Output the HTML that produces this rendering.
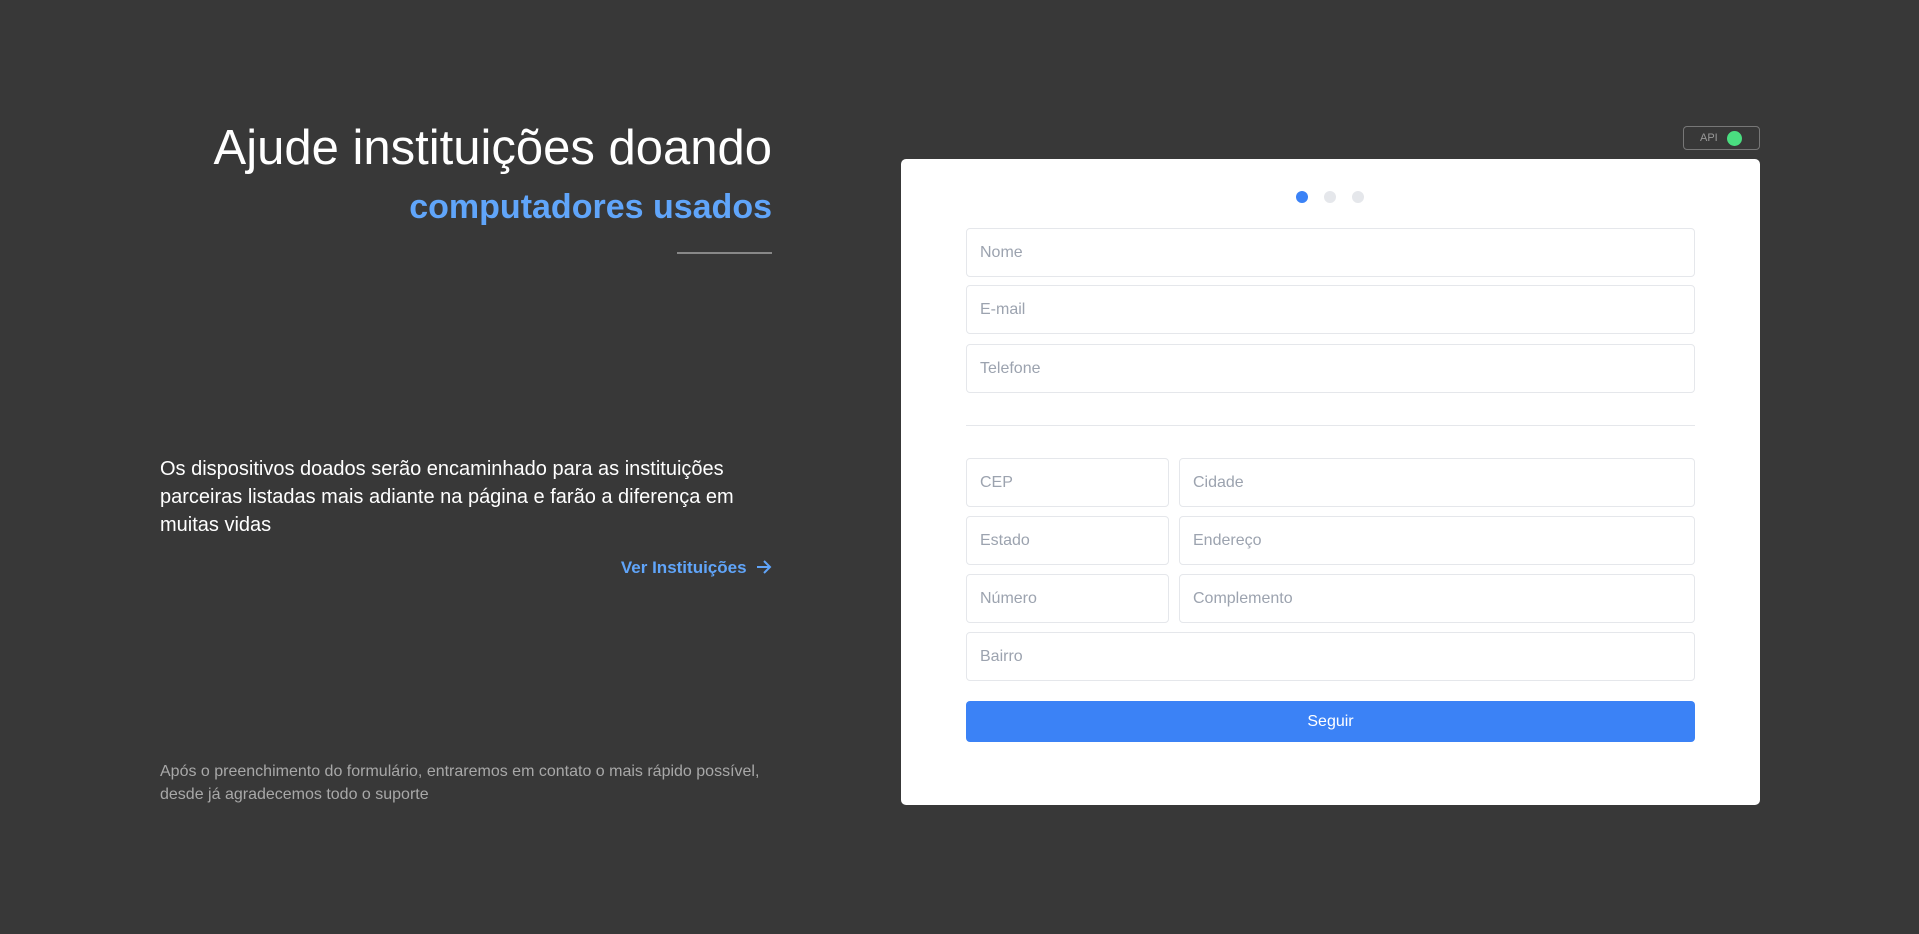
<!DOCTYPE html>
<html><head><meta charset="utf-8"><style>
*{margin:0;padding:0;box-sizing:border-box}
body{width:1919px;height:934px;background:#383838;font-family:"Liberation Sans",sans-serif;position:relative;overflow:hidden}
.a{position:absolute;white-space:nowrap}
.t1{right:1147px;top:120px;font-size:49px;color:#fff;font-weight:300;letter-spacing:0}
.t2{right:1147px;top:188px;font-size:34px;color:#60a5fa;font-weight:bold;letter-spacing:0}
.line{left:677px;top:252px;width:95px;height:2px;background:#888}
.p{left:160px;top:455px;font-size:20px;line-height:28px;color:#fff}
.ver{right:1147px;top:558px;font-size:17px;font-weight:bold;color:#60a5fa}
.foot{left:160px;top:760px;font-size:16px;line-height:23px;color:#a8a8a8}
.api{left:1683px;top:126px;width:77px;height:24px;border:1px solid #777;border-radius:4px;font-size:11px;color:#999}
.api span{position:absolute;left:16px;top:5px}
.api i{position:absolute;left:43px;top:4px;width:15px;height:15px;border-radius:50%;background:#4ade80}
.card{left:901px;top:159px;width:859px;height:646px;background:#fff;border-radius:5px}
.dot{position:absolute;top:191px;width:12px;height:12px;border-radius:50%;background:#e5e7eb}
.in{position:absolute;height:49px;border:1px solid #e5e7eb;border-radius:4px;background:#fff;font-size:16px;color:#9ca3af;padding:15px 0 0 13px}
.btn{position:absolute;left:966px;top:701px;width:729px;height:41px;background:#3b82f6;border-radius:4px;color:#fff;font-size:16px;text-align:center;line-height:41px}
</style></head><body>
<div class="a t1">Ajude instituições doando</div>
<div class="a t2">computadores usados</div>
<div class="a line"></div>
<div class="a p">Os dispositivos doados serão encaminhado para as instituições<br>parceiras listadas mais adiante na página e farão a diferença em<br>muitas vidas</div>
<div class="a ver">Ver Instituições &nbsp;<svg width="16" height="14" viewBox="0 0 16 14" style="vertical-align:-1px"><path d="M1 7h13M8 1l6 6-6 6" fill="none" stroke="#60a5fa" stroke-width="2"/></svg></div>
<div class="a foot">Após o preenchimento do formulário, entraremos em contato o mais rápido possível,<br>desde já agradecemos todo o suporte</div>
<div class="a api"><span>API</span><i></i></div>
<div class="a card"></div>
<div class="dot" style="left:1296px;background:#3b82f6"></div>
<div class="dot" style="left:1324px"></div>
<div class="dot" style="left:1352px"></div>
<div class="in" style="left:966px;top:228px;width:729px">Nome</div>
<div class="in" style="left:966px;top:285px;width:729px">E-mail</div>
<div class="in" style="left:966px;top:344px;width:729px">Telefone</div>
<div class="a" style="left:966px;top:425px;width:729px;height:1px;background:#e5e7eb"></div>
<div class="in" style="left:966px;top:458px;width:203px">CEP</div>
<div class="in" style="left:1179px;top:458px;width:516px">Cidade</div>
<div class="in" style="left:966px;top:516px;width:203px">Estado</div>
<div class="in" style="left:1179px;top:516px;width:516px">Endereço</div>
<div class="in" style="left:966px;top:574px;width:203px">Número</div>
<div class="in" style="left:1179px;top:574px;width:516px">Complemento</div>
<div class="in" style="left:966px;top:632px;width:729px">Bairro</div>
<div class="btn">Seguir</div>
</body></html>
